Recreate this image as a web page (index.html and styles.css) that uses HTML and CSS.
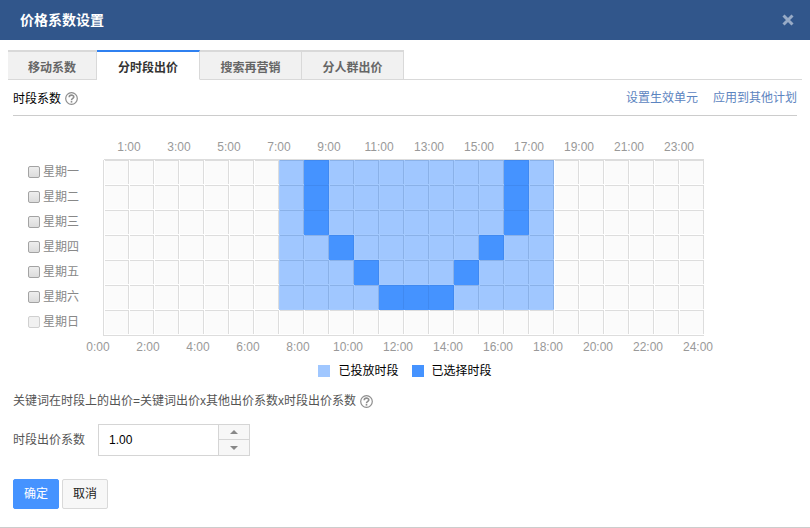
FILE: index.html
```html
<!DOCTYPE html>
<html lang="zh-CN">
<head>
<meta charset="utf-8">
<title>价格系数设置</title>
<link rel="stylesheet" href="styles.css">
</head>
<body>
<section class="dialog">
  <header class="dialog-header">
    <h1 class="dialog-title">价格系数设置</h1>
    <button class="close" type="button" aria-label="关闭">
      <svg width="12" height="12" viewBox="0 0 12 12"><path d="M1.5 1.5 10.5 10.5M10.5 1.5 1.5 10.5" stroke="currentColor" stroke-width="3" fill="none"/></svg>
    </button>
  </header>

  <nav class="tabs">
    <button class="tab" type="button">移动系数</button>
    <button class="tab active" type="button">分时段出价</button>
    <button class="tab" type="button">搜索再营销</button>
    <button class="tab" type="button">分人群出价</button>
  </nav>

  <main class="content">
    <div class="section-head">
      <h2 class="section-title">时段系数
        <svg class="help" width="13" height="13" viewBox="0 0 13 13" fill="none" stroke="currentColor"><circle cx="6.5" cy="6.5" r="5.8" stroke-width="1.2"/><path d="M4.2 5.2C4.2 2.5 8.8 2.5 8.8 4.9 8.8 6.4 6.5 6.3 6.5 8.2" stroke-width="1.6"/><path d="M6.5 9v1.6" stroke-width="1.6"/></svg>
      </h2>
      <div class="links">
        <a href="#">设置生效单元</a>
        <a href="#">应用到其他计划</a>
      </div>
    </div>

    <table class="schedule">
      <thead><tr id="odd-hours"><td class="corner"></td></tr></thead>
      <tbody id="days"></tbody>
    </table>
    <div class="even-hours" id="even-hours"></div>

    <div class="legend">
      <span class="legend-item"><i class="swatch on"></i>已投放时段</span>
      <span class="legend-item"><i class="swatch selected"></i>已选择时段</span>
    </div>

    <p class="formula">关键词在时段上的出价=关键词出价x其他出价系数x时段出价系数
      <svg class="help" width="13" height="13" viewBox="0 0 13 13" fill="none" stroke="currentColor"><circle cx="6.5" cy="6.5" r="5.8" stroke-width="1.2"/><path d="M4.2 5.2C4.2 2.5 8.8 2.5 8.8 4.9 8.8 6.4 6.5 6.3 6.5 8.2" stroke-width="1.6"/><path d="M6.5 9v1.6" stroke-width="1.6"/></svg>
    </p>

    <div class="field">
      <label for="ratio">时段出价系数</label>
      <div class="spinner">
        <input id="ratio" type="text" value="1.00">
        <div class="steps">
          <button type="button" aria-label="增加"><svg width="8" height="4" viewBox="0 0 8 4"><path d="M0 4 4 0 8 4z" fill="currentColor"/></svg></button>
          <button type="button" aria-label="减少"><svg width="8" height="4" viewBox="0 0 8 4"><path d="M0 0 4 4 8 0z" fill="currentColor"/></svg></button>
        </div>
      </div>
    </div>

    <div class="actions">
      <button class="btn primary" type="button">确定</button>
      <button class="btn" type="button">取消</button>
    </div>
  </main>
</section>
<script src="app.js"></script>
</body>
</html>
```
FILE: styles.css
```css
* {
  box-sizing: border-box;
}

body {
  margin: 0;
  background: #fff;
  color: #555;
  font: 12px/20px "Liberation Sans", "Noto Sans CJK SC", sans-serif;
}

button,
input {
  margin: 0;
  font: inherit;
}

.dialog {
  border-bottom: 1px solid #ccc;
}

.dialog-header {
  display: flex;
  align-items: center;
  justify-content: space-between;
  height: 40px;
  padding: 0 16px 0 20px;
  background: #31568b;
  color: #fff;
}

.dialog-title {
  margin: 0;
  font-size: 14px;
  font-weight: bold;
}

.close {
  display: flex;
  padding: 0;
  border: 0;
  background: none;
  color: #98abc6;
}

.tabs {
  display: flex;
  margin: 10px 8px 0;
  border-bottom: 1px solid #d9d9d9;
}

.tab {
  height: 30px;
  margin-bottom: -1px;
  padding: 4px 20px 0;
  border: 0;
  border-top: 2px solid #d9d9d9;
  border-right: 1px solid #d9d9d9;
  border-bottom: 1px solid #d9d9d9;
  background: #f1f1f1;
  color: #666;
  font-weight: bold;
  white-space: nowrap;
}

.tab + .tab {
  min-width: 102px;
}

.tab.active {
  padding: 4px 21px 0;
  border-top-color: #2f80f0;
  border-bottom-color: #fff;
  background: #fff;
  color: #333;
}

.content {
  padding: 0 13px 18px;
}

.section-head {
  display: flex;
  align-items: center;
  justify-content: space-between;
  height: 36px;
  border-bottom: 1px solid #ccc;
}

.section-title {
  display: flex;
  align-items: center;
  gap: 4px;
  margin: 0;
  padding-top: 2px;
  color: #000;
  font-size: 12px;
  font-weight: normal;
}

.help {
  color: #8e8e8e;
}

.links {
  display: flex;
  gap: 15px;
}

.links a {
  color: #5c84c0;
  text-decoration: none;
}

.schedule {
  margin-top: 21px;
  border-spacing: 0;
  table-layout: fixed;
  color: #999;
}

.schedule td,
.schedule th {
  padding: 0;
  font-weight: normal;
}

.schedule .corner {
  width: 91px;
}

.schedule thead th {
  width: 50px;
  height: 23px;
  border-bottom: 1px solid #ddd;
  vertical-align: top;
}

.schedule tbody th {
  height: 25px;
  padding-left: 15px;
  border-right: 1px solid #ddd;
  text-align: left;
  vertical-align: top;
}

.day {
  display: flex;
  align-items: center;
  gap: 3px;
  height: 23px;
  color: #888;
}

.day input {
  width: 12px;
  height: 12px;
  appearance: none;
  border: 1px solid #a3a3a3;
  border-radius: 2px;
  background: linear-gradient(#eee, #dcdcdc);
}

.day input:disabled {
  border-color: #d0d0d0;
  background: #f1f1f1;
}

.slot {
  --gap: #fff;
  --line: #ddd;
  --fill: #fbfbfb;
  width: 25px;
  height: 25px;
  background:
    linear-gradient(var(--line), var(--line)) 1px 0 / 24px 1px no-repeat,
    linear-gradient(var(--line), var(--line)) 24px 0 / 1px 24px no-repeat,
    linear-gradient(var(--fill), var(--fill)) 1px 1px / 23px 23px no-repeat,
    var(--gap);
}

.slot.on {
  --gap: #a4caff;
  --line: #8ab1e8;
  --fill: #a0c7ff;
}

.slot.selected {
  --gap: #4593ff;
  --line: #4089f0;
  --fill: #4593ff;
}

.schedule tbody tr:last-child > * {
  height: 26px;
  border-bottom: 1px solid #ddd;
}

.schedule tbody tr:last-child th {
  border-bottom: 0;
}

.even-hours {
  display: grid;
  grid-template-columns: repeat(13, 50px);
  margin-left: 60px;
  padding-top: 1px;
  color: #999;
  text-align: center;
}

.legend {
  display: flex;
  justify-content: center;
  gap: 13px;
  margin-top: 4px;
  color: #000;
}

.legend-item {
  display: flex;
  align-items: center;
  gap: 8px;
}

.swatch {
  width: 12px;
  height: 12px;
}

.swatch.on {
  background: #a0c7ff;
}

.swatch.selected {
  background: #4593ff;
}

.formula {
  display: flex;
  align-items: center;
  gap: 4px;
  margin: 10px 0 0;
}

.field {
  display: flex;
  align-items: center;
  gap: 13px;
  margin-top: 13px;
}

.spinner {
  display: flex;
  height: 32px;
  border: 1px solid #d5d5d5;
}

.spinner input {
  width: 119px;
  padding: 0 10px;
  border: 0;
  background: #fff;
  color: #000;
}

.steps {
  display: grid;
  width: 31px;
  grid-template-rows: 14px 1fr;
  border-left: 1px solid #d5d5d5;
}

.steps button {
  display: flex;
  align-items: center;
  justify-content: center;
  padding: 0;
  border: 0;
  background: #f7f7f7;
  color: #888;
}

.steps button + button {
  border-top: 1px solid #d5d5d5;
}

.actions {
  display: flex;
  gap: 3px;
  margin-top: 23px;
}

.btn {
  height: 30px;
  padding: 0 10px;
  border: 1px solid #d9d9d9;
  border-radius: 2px;
  background: #f7f7f7;
  color: #222;
}

.btn.primary {
  border-color: #4593ff;
  background: #4593ff;
  color: #fff;
}
```
FILE: app.js
```js
// One character per hour: "." off, "o" on, "x" selected.
const week = [
  ["星期一", ".......oxoooooooxo......"],
  ["星期二", ".......oxoooooooxo......"],
  ["星期三", ".......oxoooooooxo......"],
  ["星期四", ".......ooxoooooxoo......"],
  ["星期五", ".......oooxoooxooo......"],
  ["星期六", ".......ooooxxxoooo......"],
  ["星期日", "........................"]
];
const state = { ".": "", o: " on", x: " selected" };

let odd = "";
for (let h = 1; h < 24; h += 2) odd += `<th colspan="2" scope="colgroup">${h}:00</th>`;
document.getElementById("odd-hours").insertAdjacentHTML("beforeend", odd);

let even = "";
for (let h = 0; h <= 24; h += 2) even += `<span>${h}:00</span>`;
document.getElementById("even-hours").innerHTML = even;

document.getElementById("days").innerHTML = week.map(([name, hours], i) => {
  const disabled = hours.includes("o") ? "" : " disabled";
  const cells = [...hours].map(c => `<td class="slot${state[c]}"></td>`).join("");
  return `<tr><th scope="row"><label class="day" for="day${i}"><input type="checkbox" id="day${i}"${disabled}>${name}</label></th>${cells}</tr>`;
}).join("");
```
